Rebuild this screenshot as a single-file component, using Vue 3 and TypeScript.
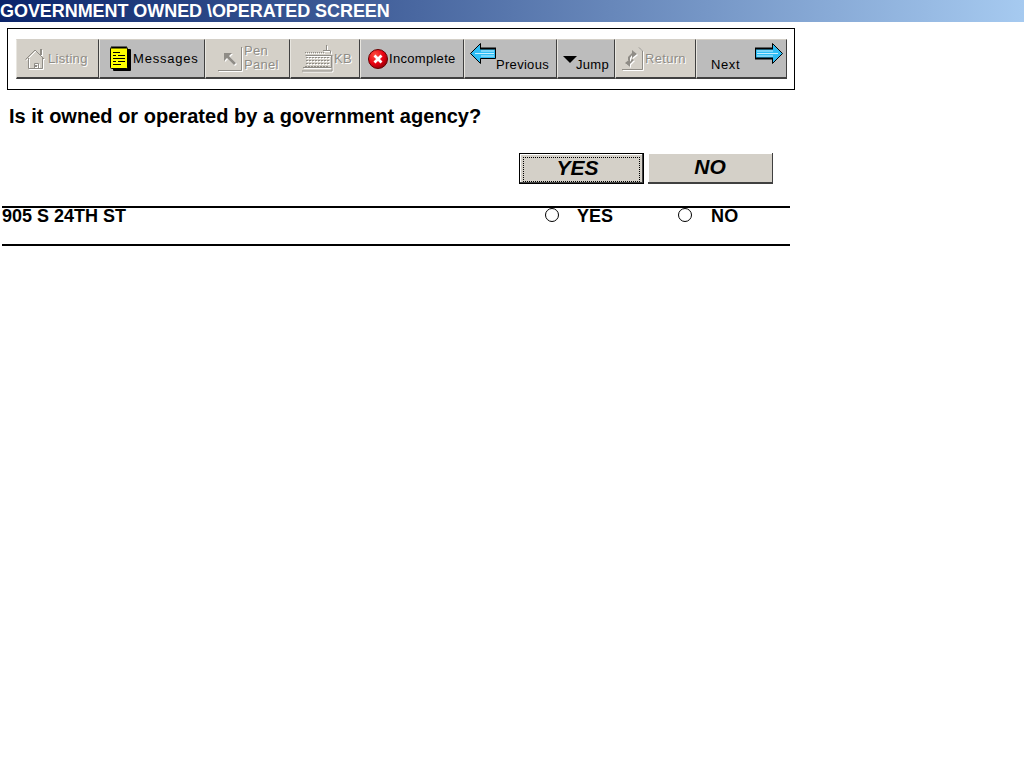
<script setup lang="ts">
</script>

<template>
    <div class="title">GOVERNMENT OWNED \OPERATED SCREEN</div>
    <div class="toolbar-box">
        <div class="toolbar">
            <div class="tool off listing">
                <svg class="ico" width="21" height="22" viewBox="0 0 21 22" fill="none" stroke="#8f8c86"><path d="M.5 11.500 10 2l9 9M3.500 10v10.500h14V10M9.500 20.500v-5h4v5"/><path d="M15 1h2v6h-2z" fill="#8f8c86" stroke="none"/><path d="M10 17h2v2h-2z" fill="#8f8c86" stroke="none"/></svg>
                <span>Listing</span>
            </div>
            <div class="tool messages">
                <svg class="ico" width="21" height="25" viewBox="0 0 21 25"><rect x="3" y="3" width="18" height="22" rx="1" fill="#000"/><rect x=".5" y="1.500" width="17" height="21" rx="1" fill="#ffff00" stroke="#000"/><path d="M2 0v3M4 0v3M6 0v3M8 0v3M10 0v3M12 0v3M14 0v3M16 0v3M3 6.500h7M3 9.500h3M8 9.500h7M3 12.500h12M3 15.500h3M8 15.500h7M3 18.500h8" stroke="#000"/></svg>
                <span>Messages</span>
            </div>
            <div class="tool off pen">
                <svg class="ico" width="24" height="24" viewBox="0 0 24 24" fill="none" stroke="#8f8c86"><path d="M0 23.500h23.500V0"/><path d="M6 6h8l-3 3 7 7-2 2-7-7-3 3z" fill="#8f8c86" stroke="none"/></svg>
                <span class="two">Pen<br>Panel</span>
            </div>
            <div class="tool off kb">
                <svg class="ico" width="32" height="28" viewBox="0 0 32 28" fill="none" stroke="#8f8c86"><path d="M3 7.500h19" stroke-dasharray="1 1"/><path d="M21 5.500h7M24.500 0v5M28.500 5.500v3" /><path d="M3.500 10.500h26v12H1" /><path d="M30 10v16H0"/><path d="M4 12.500h23M4 15.500h23M4 18.500h23M3 21.500h24" stroke-dasharray="2 1"/></svg>
                <span>KB</span>
            </div>
            <div class="tool incomplete">
                <svg class="ico" width="20" height="20" viewBox="0 0 20 20"><defs><radialGradient id="redball" cx="35%" cy="30%" r="75%"><stop offset="0" stop-color="#ff5040"/><stop offset="0.6" stop-color="#e80010"/><stop offset="1" stop-color="#900008"/></radialGradient></defs><circle cx="10" cy="10" r="9.500" fill="url(#redball)" stroke="#600"/><path d="M6.500 6.500l7 7M13.500 6.500l-7 7" stroke="#fff" stroke-width="2.800"/></svg>
                <span>Incomplete</span>
            </div>
            <div class="tool raised previous">
                <svg class="ico up" width="26" height="21" viewBox="0 0 26 21"><path d="M.5 10.500 10.500.5v5h15v10h-15v5z" fill="#2fbdf4" stroke="#000"/><path d="M10 5.500h16" stroke="#000" stroke-width="2"/><path d="M11 8h13M5 10.500h19M11 13h13" stroke="#c4efff"/></svg>
                <span class="down">Previous</span>
            </div>
            <div class="tool raised jump">
                <svg class="ico" width="14" height="7" viewBox="0 0 14 7"><path d="M0 0h14L7 7z" fill="#000"/></svg>
                <span class="down">Jump</span>
            </div>
            <div class="tool off ret">
                <svg class="ico" width="22" height="23" viewBox="0 0 22 23" fill="none" stroke="#8f8c86"><path d="M0 22.500h20.500V4L17 .5"/><path d="M6 10l4-4V3l5 4-5 4V8l-2 3v2H6zM12 13l-4 4v3l-5-4 5-4v3l2-3z" fill="#8f8c86" stroke="none"/></svg>
                <span>Return</span>
            </div>
            <div class="tool raised next">
                <span class="down">Next</span>
                <svg class="ico up" width="28" height="21" viewBox="0 0 28 21"><path d="M27.500 10.500 17.500.5v5H.5v10h17v5z" fill="#2fbdf4" stroke="#000"/><path d="M0 5.500h18M0 15.500h18" stroke="#000" stroke-width="2"/><path d="M2 8h16M2 10.500h21M2 13h16" stroke="#c4efff"/></svg>
            </div>
        </div>
    </div>

    <p class="question">Is it owned or operated by a government agency?</p>

    <div class="answers">
        <button class="answer focus"><span>YES</span></button>
        <button class="answer"><span>NO</span></button>
    </div>

    <div class="row">
        <span class="addr">905 S 24TH ST</span>
        <label class="opt yes"><i class="radio"></i>YES</label>
        <label class="opt no"><i class="radio"></i>NO</label>
    </div>
</template>

<style>
body {
    background: #fff;
}
</style>

<style scoped>
.title {
    height: 22px;
    background: linear-gradient(90deg, #0a246a, #a6caf0);
    color: #fff;
    font: bold 18px/22px "Liberation Sans", Arial, sans-serif;
    letter-spacing: -0.06px;
    white-space: nowrap;
}

.toolbar-box {
    box-sizing: border-box;
    width: 788px;
    height: 62px;
    margin: 6px 0 0 7px;
    padding: 10px 0 0 8px;
    border: 1px solid #000;
}

.toolbar {
    display: flex;
    height: 40px;
}

.tool {
    box-sizing: border-box;
    flex-shrink: 0;
    display: flex;
    align-items: center;
    height: 40px;
    gap: 2px;
    background: #bcbcbc;
    border-top: 1px solid #d4d0c8;
    border-left: 1px solid #e8e6e0;
    border-right: 1px solid #404040;
    border-bottom: 2px solid #404040;
    color: #000;
    font: 13px "Liberation Sans", Arial, sans-serif;
    letter-spacing: 0.3px;
}

.off {
    background: #d4d0c8;
    color: #8f8c86;
    text-shadow: 1px 1px 0 #fff;
}

.off .ico {
    filter: drop-shadow(1px 1px 0 #fff);
}

.listing { width: 83px; padding-left: 8px; }
.messages { width: 106px; padding-left: 10px; letter-spacing: 0.8px; }
.pen { width: 85px; padding-left: 12px; }
.kb { width: 70px; padding-left: 11px; gap: 0; }
.incomplete { width: 104px; padding-left: 7px; gap: 1px; }
.previous { width: 93px; padding-left: 5px; gap: 0; }
.jump { width: 58px; padding-left: 5px; gap: 0; }
.ret { width: 81px; padding-left: 6px; gap: 1px; }
.next { width: 91px; justify-content: space-between; padding: 0 3px 0 14px; letter-spacing: 0.6px; }

.two {
    margin-top: -2px;
    line-height: 14px;
}

.raised .down {
    align-self: flex-end;
    margin-bottom: 5px;
}

.raised .up {
    align-self: flex-start;
    margin-top: 3px;
}

.jump .ico {
    margin-bottom: -1px;
    margin-right: -1px;
}

.question {
    margin: 14px 0 0 9px;
    color: #000;
    font: bold 20px/24px "Liberation Sans", Arial, sans-serif;
    letter-spacing: 0.02px;
}

.answers {
    display: flex;
    gap: 4px;
    margin: 25px 0 0 519px;
}

.answer {
    box-sizing: border-box;
    width: 125px;
    height: 31px;
    padding: 0;
    background: #d4d0c8;
    border: 0;
    border-right: 1px solid #404040;
    border-bottom: 2px solid #404040;
    box-shadow: inset 1px 1px 0 #fff;
    color: #000;
    font: italic bold 21px/27px "Liberation Sans", Arial, sans-serif;
}

.answer span {
    position: relative;
    top: -1px;
}

.focus {
    border: 1px solid #000;
    box-shadow: inset -1px -1px 0 #404040, inset 1px 1px 0 #fff;
    padding: 3px;
}

.focus span {
    display: block;
    top: 0;
    height: 100%;
    padding-right: 8px;
    line-height: 20px;
    border: 1px dotted #000;
}

.row {
    box-sizing: border-box;
    display: flex;
    align-items: flex-start;
    width: 788px;
    height: 40px;
    margin: 22px 0 0 2px;
    border-top: 2px solid #000;
    border-bottom: 2px solid #000;
    color: #000;
    font: bold 18px/17px "Liberation Sans", Arial, sans-serif;
}

.addr {
    width: 543px;
}

.opt {
    display: flex;
    align-items: flex-start;
}

.yes {
    width: 133px;
}

.no {
    letter-spacing: 0.2px;
}

.radio {
    box-sizing: border-box;
    flex-shrink: 0;
    width: 14px;
    height: 14px;
    margin-right: 18px;
    background: #fff;
    border: 1px solid #000;
    border-radius: 50%;
}

.no .radio {
    margin-right: 19px;
}
</style>
